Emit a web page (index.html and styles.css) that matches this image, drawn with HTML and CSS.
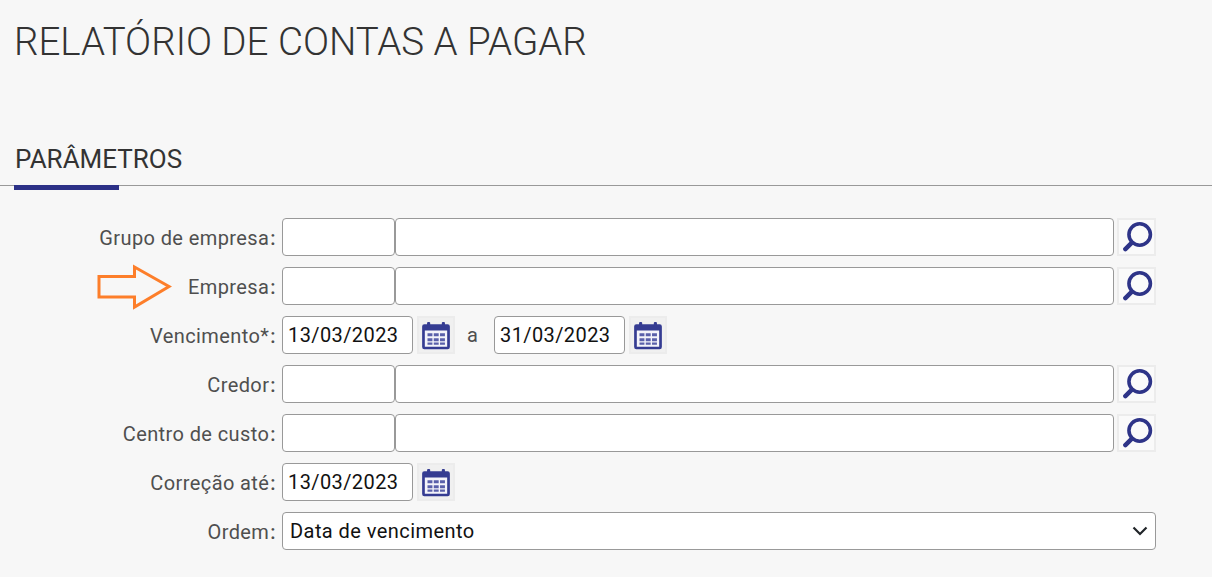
FILE: index.html
```html
<!DOCTYPE html>
<html lang="pt-BR">
<head>
<meta charset="utf-8">
<title>Relatório de contas a pagar</title>
<link rel="stylesheet" href="styles.css">
</head>
<body>
<svg width="0" height="0" class="defs">
  <symbol id="i-search" viewBox="0 0 38 38">
    <circle cx="22" cy="16.200" r="12" fill="none" stroke="#2e3488" stroke-width="4"/>
    <path d="M13 25.500 L6 32.500" fill="none" stroke="#2e3488" stroke-width="5" stroke-linecap="round"/>
  </symbol>
  <symbol id="i-cal" viewBox="0 0 38 38">
    <rect x="4" y="8" width="30" height="26" fill="#f4f4fa"/>
    <path fill-rule="evenodd" fill="#353c92" d="M6 7h26a2.500 2.500 0 0 1 2.500 2.500v23a2.500 2.500 0 0 1-2.500 2.500H6a2.500 2.500 0 0 1-2.500-2.500v-23A2.500 2.500 0 0 1 6 7zM6.500 14v18h25V14z"/>
    <rect x="9" y="4.500" width="3.500" height="6" rx="1.200" fill="#353c92"/>
    <rect x="25.500" y="4.500" width="3.500" height="6" rx="1.200" fill="#353c92"/>
    <path fill="#5a60aa" d="M9.500 17h5.500v3.500h-5.500zM16.500 17h5.500v3.500h-5.500zM23.500 17h5.500v3.500h-5.500zM9.500 22.500h5.500v3.500h-5.500zM16.500 22.500h5.500v3.500h-5.500zM23.500 22.500h5.500v3.500h-5.500zM9.500 27.500h5.500v2.500h-5.500zM16.500 27.500h5.500v2.500h-5.500zM23.500 27.500h5.500v2.500h-5.500z"/>
  </symbol>
</svg>
<main class="page">
  <h1 class="title">RELATÓRIO DE CONTAS A PAGAR</h1>
  <section class="section">
    <h2 class="section-title">PARÂMETROS</h2>
    <form class="form">
      <div class="row">
        <label class="label">Grupo de empresa<span class="colon">:</span></label>
        <input class="input code" type="text"><input class="input desc" type="text">
        <button class="icon-btn" type="button"><svg class="icon"><use href="#i-search"/></svg></button>
      </div>
      <div class="row">
        <svg class="arrow" width="76" height="46" viewBox="0 0 76 46"><path d="M2 12.500H37.500V3L72 22.500 37.500 43V33H2z" fill="none" stroke="#fd7e2a" stroke-width="3"/></svg>
        <label class="label">Empresa<span class="colon">:</span></label>
        <input class="input code" type="text"><input class="input desc" type="text">
        <button class="icon-btn" type="button"><svg class="icon"><use href="#i-search"/></svg></button>
      </div>
      <div class="row">
        <label class="label">Vencimento*<span class="colon">:</span></label>
        <input class="input date" type="text" value="13/03/2023">
        <button class="icon-btn cal" type="button"><svg class="icon"><use href="#i-cal"/></svg></button>
        <span class="sep">a</span>
        <input class="input date" type="text" value="31/03/2023">
        <button class="icon-btn cal" type="button"><svg class="icon"><use href="#i-cal"/></svg></button>
      </div>
      <div class="row">
        <label class="label">Credor<span class="colon">:</span></label>
        <input class="input code" type="text"><input class="input desc" type="text">
        <button class="icon-btn" type="button"><svg class="icon"><use href="#i-search"/></svg></button>
      </div>
      <div class="row">
        <label class="label">Centro de custo<span class="colon">:</span></label>
        <input class="input code" type="text"><input class="input desc" type="text">
        <button class="icon-btn" type="button"><svg class="icon"><use href="#i-search"/></svg></button>
      </div>
      <div class="row">
        <label class="label">Correção até<span class="colon">:</span></label>
        <input class="input date" type="text" value="13/03/2023">
        <button class="icon-btn cal" type="button"><svg class="icon"><use href="#i-cal"/></svg></button>
      </div>
      <div class="row">
        <label class="label">Ordem<span class="colon">:</span></label>
        <div class="select">
          <span>Data de vencimento</span>
          <svg class="chevron" width="16" height="10" viewBox="0 0 16 10"><path d="M1.500 1.500L8 8l6.500-6.500" fill="none" stroke="#212529" stroke-width="2.200"/></svg>
        </div>
      </div>
    </form>
  </section>
</main>
</body>
</html>
```
FILE: styles.css
```css
* { box-sizing: border-box; }
html, body { margin: 0; height: 100%; overflow: hidden; }
body { background: #f7f7f7; font-family: Roboto, "Liberation Sans", sans-serif; color: #212529; }
.defs { position: absolute; }
.title { margin: 0; padding: 19px 0 0 14px; height: 145px; font-size: 38.5px; font-weight: 300; line-height: 45px; color: #333; }
.section-title { position: relative; margin: 0; height: 41px; padding-left: 15px; font-size: 26px; font-weight: 400; line-height: 29px; color: #333; border-bottom: 1px solid #999; }
.section-title::after { content: ""; position: absolute; left: 14px; bottom: -5px; width: 105px; height: 5px; background: #2c3187; }
.form { display: flex; flex-direction: column; gap: 11px; padding-top: 32px; }
.row { position: relative; display: flex; align-items: center; height: 38px; }
.label { width: 276px; padding-top: 1px; text-align: right; font-size: 20px; letter-spacing: 0.4px; color: #4f4f4f; margin-right: 6px; }
.colon { font-weight: 500; margin-left: 1px; }
.input { height: 38px; padding: 0 5px; font: 400 20px Roboto, "Liberation Sans", sans-serif; letter-spacing: 0.4px; color: #111; background: #fff; border: 1px solid #999; border-radius: 4px; outline: none; }
.code { width: 113px; }
.desc { width: 719px; }
.date { width: 131px; }
.icon-btn { width: 39px; height: 38px; margin-left: 3px; padding: 0; background: #fafafa; border: 2px solid #ececec; display: flex; align-items: center; justify-content: center; }
.icon-btn.cal { margin-left: 4px; width: 38px; background: #f0f0f0; }
.icon { display: block; width: 34px; height: 34px; filter: blur(0.4px); }
.sep { width: 39px; padding-right: 4px; text-align: center; font-size: 20px; color: #4f4f4f; }
.select { width: 874px; height: 38px; padding: 0 7px 0 7px; display: flex; align-items: center; justify-content: space-between; font-size: 20px; letter-spacing: 0.44px; color: #111; background: #fff; border: 1px solid #999; border-radius: 4px; }
.arrow { position: absolute; left: 97px; top: -3px; }
```
